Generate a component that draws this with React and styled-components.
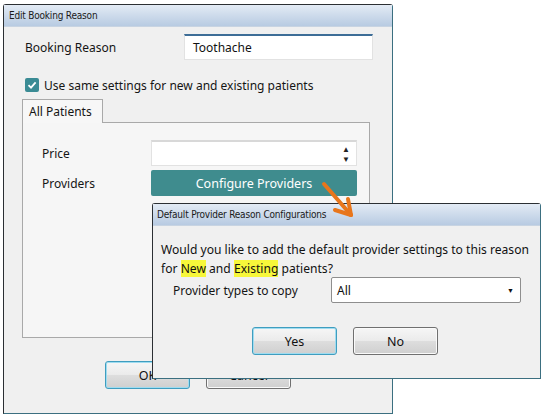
import React from "react";
import styled, { createGlobalStyle } from "styled-components";

const UI_FONT = `"Noto Sans", "Open Sans", sans-serif`;
const TITLE_FONT = `"DejaVu Sans Condensed", "DejaVu Sans", sans-serif`;

const GlobalStyle = createGlobalStyle`
  html, body {
    margin: 0;
    padding: 0;
    background: #ffffff;
  }
  body {
    font-family: ${UI_FONT};
    color: #151515;
  }
`;

// free canvas: windows are placed where they sit on the desktop
const Desktop = styled.div`
  position: relative;
  width: 547px;
  height: 418px;
  overflow: hidden;
  background: #ffffff;
`;

const Window = styled.div`
  position: absolute;
  left: ${(p) => p.left}px;
  top: ${(p) => p.top}px;
  width: ${(p) => p.width}px;
  height: ${(p) => p.height}px;
  box-sizing: border-box;
  display: flex;
  flex-direction: column;
  background: #f0f0f0;
  border: 1px solid #2b2f33;
  border-right-color: #3b6f80;
  border-bottom-color: #3b6f80;
  border-radius: 3px 3px 0 0;
`;

const TitleBar = styled.div`
  height: ${(p) => p.height || 21}px;
  flex: none;
  display: flex;
  align-items: center;
  padding-left: ${(p) => p.indent || 5}px;
  background: linear-gradient(#e3ebf5 0%, #cfdcec 45%, #b8cbe2 100%);
  border-bottom: 1px solid #c8d4e2;
  font-family: ${TITLE_FONT};
  font-size: 10px;
  letter-spacing: -0.2px;
  color: #1a1a1a;
`;

const Body = styled.div`
  flex: 1;
  display: flex;
  flex-direction: column;
  padding: ${(p) => p.pad};
`;

const FieldRow = styled.div`
  display: grid;
  grid-template-columns: ${(p) => p.cols};
  align-items: center;
  height: 26px;
  margin: ${(p) => p.m || 0};
`;

const Label = styled.span`
  font-size: 12px;
  color: #151515;
`;

const TextBox = styled.div`
  height: 26px;
  box-sizing: border-box;
  display: flex;
  align-items: center;
  justify-content: space-between;
  padding: 0 6px 0 8px;
  background: #ffffff;
  border: 1px solid #e2e2e2;
  border-top: 2px solid ${(p) => (p.focus ? "#3d6d97" : "#d8d8d8")};
  font-size: 12px;
  color: #111;
`;

const Spinner = styled.div`
  display: flex;
  flex-direction: column;
  font-size: 8px;
  line-height: 10px;
  color: #222;
`;

const CheckRow = styled.label`
  display: flex;
  align-items: center;
  gap: 5px;
  height: 16px;
  margin: 17px 0 0 3px;
  font-size: 12px;
`;

const CheckBox = styled.span`
  width: 14px;
  height: 14px;
  border-radius: 2px;
  background: #3a8b94;
  display: flex;
  align-items: center;
  justify-content: center;
`;

const Tabs = styled.div`
  margin-top: 6px;
  display: flex;
  flex-direction: column;
  width: 348px;
`;

const Tab = styled.div`
  width: 81px;
  height: 24px;
  box-sizing: border-box;
  border: 1px solid #a9a9a9;
  border-bottom: none;
  background: #f7f7f7;
  padding-left: 6px;
  display: flex;
  align-items: center;
  font-size: 12px;
  position: relative;
  z-index: 1;
  margin-bottom: -1px;
`;

const Panel = styled.div`
  height: 216px;
  box-sizing: border-box;
  border: 1px solid #a9a9a9;
  background: #f6f6f6;
  padding: 17px 0 0 19px;
  display: flex;
  flex-direction: column;
  gap: 4px;
`;

const TealButton = styled.div`
  height: 26px;
  border-radius: 2px;
  background: #3f8c8e;
  color: #ffffff;
  display: flex;
  align-items: center;
  justify-content: center;
  font-size: 12.5px;
`;

const ButtonRow = styled.div`
  display: flex;
  gap: ${(p) => p.gap}px;
  margin: ${(p) => p.m};
`;

const Button = styled.div`
  width: 85px;
  height: 28px;
  box-sizing: border-box;
  border-radius: 3px;
  border: 1px solid ${(p) => (p.focus ? "#3f9dbf" : "#707070")};
  box-shadow: ${(p) => (p.focus ? "inset 0 0 0 1px #9fdcf0" : "inset 0 0 0 1px #fafafa")};
  background: linear-gradient(#f6f6f6 0%, #ebebeb 48%, #dddddd 52%, #cfcfcf 100%);
  display: flex;
  align-items: center;
  justify-content: center;
  font-size: 12.5px;
  color: #111;
`;

const Message = styled.p`
  margin: 0;
  font-size: 12.1px;
  line-height: 19px;
  white-space: nowrap;
  color: #111;
`;

const Mark = styled.span`
  background: #f7f73a;
`;

const Select = styled(TextBox)`
  border: 1px solid #8e8e8e;
  border-radius: 2px;
  padding: 0 6px 0 5px;
`;

const Caret = styled.span`
  font-size: 7px;
`;

const Arrow = styled.svg`
  position: absolute;
  left: 318px;
  top: 178px;
  overflow: visible;
`;

export default function App() {
  return (
    <>
      <GlobalStyle />
      <Desktop>
        <Window left={3} top={4} width={390} height={410}>
          <TitleBar>Edit Booking Reason</TitleBar>
          <Body pad="7px 0 0 18px">
            <FieldRow cols="159px 189px" m="0 0 0 3px">
              <Label>Booking Reason</Label>
              <TextBox focus>Toothache</TextBox>
            </FieldRow>
            <CheckRow>
              <CheckBox>
                <svg width="10" height="10" viewBox="0 0 10 10">
                  <path d="M1.5 5.2 L4 7.6 L8.6 2.4" fill="none" stroke="#fff" strokeWidth="1.8" />
                </svg>
              </CheckBox>
              Use same settings for new and existing patients
            </CheckRow>
            <Tabs>
              <Tab>All Patients</Tab>
              <Panel>
                <FieldRow cols="109px 206px">
                  <Label>Price</Label>
                  <TextBox>
                    <span />
                    <Spinner>
                      <span>▲</span>
                      <span>▼</span>
                    </Spinner>
                  </TextBox>
                </FieldRow>
                <FieldRow cols="109px 206px">
                  <Label>Providers</Label>
                  <TealButton>Configure Providers</TealButton>
                </FieldRow>
              </Panel>
            </Tabs>
            <ButtonRow gap={16} m="23px 0 0 83px">
              <Button focus>OK</Button>
              <Button>Cancel</Button>
            </ButtonRow>
          </Body>
        </Window>

        <Window left={152} top={203} width={389} height={176}>
          <TitleBar indent={4}>Default Provider Reason Configurations</TitleBar>
          <Body pad="14px 0 0 8px">
            <Message>
              Would you like to add the default provider settings to this reason
              <br />
              for <Mark>New</Mark> and <Mark>Existing</Mark> patients?
            </Message>
            <FieldRow cols="158px 190px" m="-1px 0 0 12px">
              <Label>Provider types to copy</Label>
              <Select>
                All
                <Caret>▼</Caret>
              </Select>
            </FieldRow>
            <ButtonRow gap={16} m="24px 0 0 91px">
              <Button focus>Yes</Button>
              <Button>No</Button>
            </ButtonRow>
          </Body>
        </Window>

        <Arrow width="40" height="45" viewBox="0 0 40 45">
          <g stroke="#e8761c" strokeWidth="4" strokeLinecap="round" fill="none">
            <path d="M6 6 L33 37" />
            <path d="M33 37 L30 21" />
            <path d="M33 37 L17 32" />
          </g>
        </Arrow>
      </Desktop>
    </>
  );
}
